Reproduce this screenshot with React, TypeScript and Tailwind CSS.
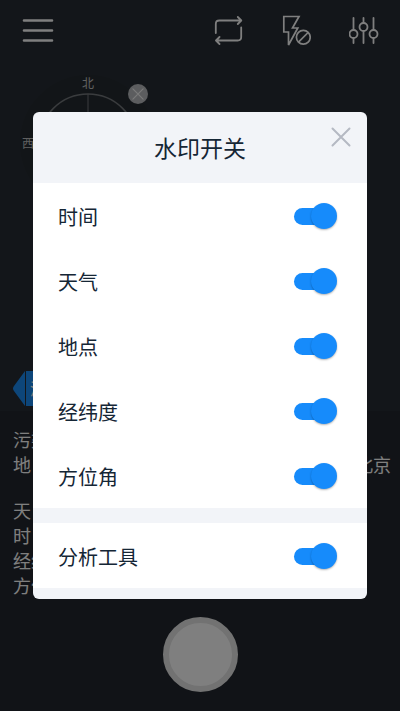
import React, { useState } from 'react';

const WATERMARKS = [
  { id: 'time', label: '时间' },
  { id: 'weather', label: '天气' },
  { id: 'place', label: '地点' },
  { id: 'coords', label: '经纬度' },
  { id: 'bearing', label: '方位角' },
];

function MenuIcon() {
  return (
    <svg width="32" height="24" viewBox="0 0 32 24" fill="none" stroke="currentColor" strokeWidth="2.6" strokeLinecap="round">
      <path d="M2 2.5H30M2 12.5H30M2 22.5H30" />
    </svg>
  );
}

function RepeatIcon() {
  return (
    <svg width="30" height="30" viewBox="0 0 30 30" fill="none" stroke="currentColor" strokeWidth="1.8" strokeLinecap="round" strokeLinejoin="round">
      <path d="M2.800 18V9Q2.800 5.500 6.300 5.500H28M24.800 2L28.300 5.500L24.800 9" />
      <path d="M28.200 12.500V22Q28.200 25.500 24.700 25.500H3.500M6.500 22L3 25.500L6.500 29" />
    </svg>
  );
}

function FlashOffIcon() {
  return (
    <svg width="30" height="32" viewBox="0 0 30 32" fill="none" stroke="currentColor" strokeWidth="1.7" strokeLinejoin="miter">
      <path d="M2.800 2.500H18L11.500 14H16.800L7.500 31V18H2.800Z" />
      <circle cx="22.300" cy="23.300" r="6.900" />
      <path d="M17.500 28.100L27.100 18.500" />
    </svg>
  );
}

function SlidersIcon() {
  return (
    <svg width="30" height="28" viewBox="0 0 30 28" fill="none" stroke="currentColor" strokeWidth="1.8" strokeLinecap="round">
      <path d="M4.500 2V14M4.500 22V27M14.500 2V7M14.500 15V27M24.500 2V14M24.500 22V27" />
      <circle cx="4.500" cy="18" r="4" />
      <circle cx="14.500" cy="11" r="4" />
      <circle cx="24.500" cy="18" r="4" />
    </svg>
  );
}

function CloseIcon({ className }) {
  return (
    <svg className={className} viewBox="0 0 20 20" fill="none" stroke="currentColor" strokeWidth="2" strokeLinecap="round">
      <path d="M1.500 1.500L18.500 18.500M18.500 1.500L1.500 18.500" />
    </svg>
  );
}

function Compass() {
  return (
    <div className="relative w-[136px] h-[136px] ml-5 rounded-full bg-[#252b31] text-xs leading-4 text-[#c0c0c0]">
      <svg className="block" width="136" height="136" viewBox="0 0 136 136" fill="none" stroke="#74787c" strokeWidth="1.500">
        <circle cx="68" cy="68" r="49" />
        <path d="M68 19V117M19 68H117" strokeWidth="1" />
      </svg>
      <span className="absolute top-0 inset-x-0 text-center">北</span>
      <span className="absolute left-0.5 top-[60px]">西</span>
      <button aria-label="关闭罗盘" className="absolute right-2 top-[9px] w-5 h-5 rounded-full bg-[#b8babe] text-[#f4f4f4] flex items-center justify-center">
        <CloseIcon className="w-3 h-3" />
      </button>
    </div>
  );
}

function SwitchRow({ id, label, checked, onChange }) {
  return (
    <div className="flex items-center justify-between h-[65px] pt-px pl-[25px] pr-[30px] bg-white">
      <label htmlFor={id} className="text-xl leading-7 pt-px">{label}</label>
      <span className="relative w-[43px] h-[26px] flex items-center">
        <input
          id={id}
          type="checkbox"
          role="switch"
          checked={checked}
          onChange={onChange}
          className="peer absolute inset-0 w-full h-full m-0 opacity-0 cursor-pointer z-10"
        />
        <span className="w-9 h-[17px] rounded-full bg-gray-300 peer-checked:bg-[#168bfb]" />
        <span className="absolute left-0 top-0 w-[26px] h-[26px] rounded-full bg-white shadow-[0_1px_2px_rgba(0,0,0,0.3)] peer-checked:left-[17px] peer-checked:bg-[#168bfb]" />
      </span>
    </div>
  );
}

export default function App() {
  const [open, setOpen] = useState(true);
  const [enabled, setEnabled] = useState({
    time: true,
    weather: true,
    place: true,
    coords: true,
    bearing: true,
    tools: true,
  });

  const toggle = (id) => setEnabled((prev) => ({ ...prev, [id]: !prev[id] }));

  return (
    <div className="relative min-h-screen flex flex-col bg-[#272d34] text-white overflow-hidden font-['Noto_Sans_CJK_SC',sans-serif]">
      <header className="flex items-center justify-between h-[60px] pl-[22px] pr-[21px]">
        <button aria-label="菜单"><MenuIcon /></button>
        <div className="flex items-center gap-[38px]">
          <button aria-label="切换镜头"><RepeatIcon /></button>
          <button aria-label="闪光灯"><FlashOffIcon /></button>
          <button aria-label="设置"><SlidersIcon /></button>
        </div>
      </header>

      {/* Viewfinder */}
      <section className="flex-1 flex flex-col justify-between pt-[15px] pb-[5px]">
        <Compass />
        <div className="flex items-center h-[35px] ml-[13px] text-base">
          <svg width="12" height="35" viewBox="0 0 12 35" fill="#1a8cf5">
            <path d="M12 0V35L1 20Q-1 17.500 1 15Z" />
          </svg>
          <span className="h-[35px] ml-px pl-1 pr-4 leading-[35px] bg-[#1a8cf5]">添加</span>
        </div>
      </section>

      {/* Watermark text and shutter */}
      <section className="pt-4 pb-[19px] bg-[#22272e]">
        <div className="pl-[13px] pr-[9px] text-lg leading-[25px] whitespace-nowrap">
          <p>污染</p>
          <p className="flex justify-between"><span>地　点</span><span>北京</span></p>
          <div className="mt-[21px]">
            <p>天　气</p>
            <p>时　间</p>
            <p>经纬</p>
            <p>方位</p>
          </div>
        </div>
        <button aria-label="拍照" className="block w-[75px] h-[75px] mx-auto mt-[19px] rounded-full bg-white border-[6px] border-[#e4e4e4]" />
      </section>

      {open && (
        <div className="absolute inset-0 flex items-center justify-center px-[33px] bg-black/50">
          <div role="dialog" aria-labelledby="dialog-title" className="relative w-full max-w-md rounded-md overflow-hidden bg-[#f2f4f8] text-[#152635]">
            <h1 id="dialog-title" className="h-[71px] text-center text-[23px] leading-[70px]">水印开关</h1>
            <button aria-label="关闭" onClick={() => setOpen(false)} className="absolute top-[15px] right-4 text-[#b5b9c3]">
              <CloseIcon className="w-5 h-5" />
            </button>
            {WATERMARKS.map((item) => (
              <SwitchRow
                key={item.id}
                id={item.id}
                label={item.label}
                checked={enabled[item.id]}
                onChange={() => toggle(item.id)}
              />
            ))}
            <div className="mt-[15px] mb-[11px]">
              <SwitchRow id="tools" label="分析工具" checked={enabled.tools} onChange={() => toggle('tools')} />
            </div>
          </div>
        </div>
      )}
    </div>
  );
}
